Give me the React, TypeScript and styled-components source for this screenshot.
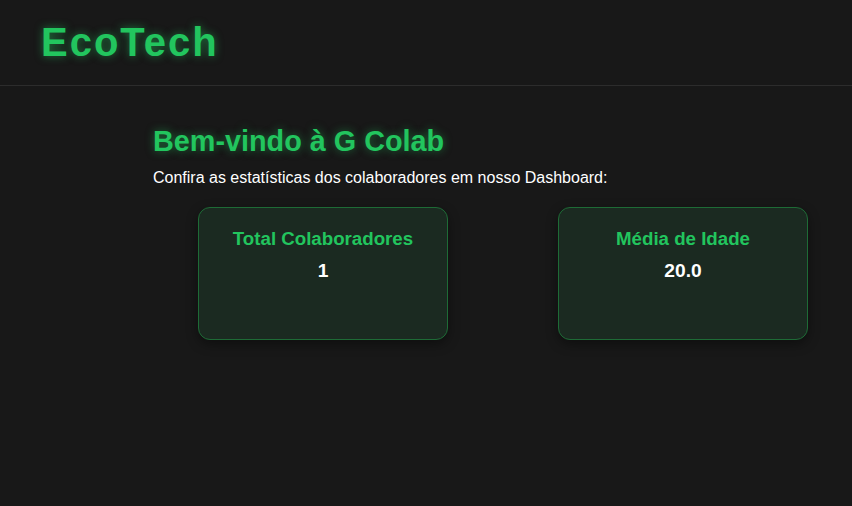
import React from "react";
import styled, { createGlobalStyle } from "styled-components";

const Global = createGlobalStyle`
  html, body { margin: 0; padding: 0; background: #181818; }
  body { font-family: "Liberation Sans", Arial, sans-serif; color: #ffffff; }
  * { box-sizing: border-box; }
`;

const Page = styled.div`
  min-height: 506px;
  background: #181818;
`;

const Header = styled.header`
  height: 86px;
  border-bottom: 1px solid #2c2c2c;
  display: flex;
  align-items: center;
  padding-left: 41px;
`;

const Logo = styled.h1`
  margin: 0;
  font-size: 40px;
  font-weight: 700;
  letter-spacing: 2px;
  color: #22c55e;
  text-shadow: 0 0 8px rgba(34, 197, 94, 0.55);
`;

const Main = styled.main`
  padding: 39px 0 0 153px;
`;

const Title = styled.h2`
  margin: 0;
  font-size: 28.8px;
  font-weight: 700;
  color: #22c55e;
  text-shadow: 0 0 8px rgba(34, 197, 94, 0.5);
`;

const Intro = styled.p`
  margin: 11px 0 0;
  font-size: 16px;
  color: #ffffff;
`;

const Cards = styled.div`
  display: flex;
  gap: 110px;
  padding-left: 45px;
  margin-top: 20px;
`;

const Card = styled.div`
  width: 250px;
  height: 133px;
  background: #1b2a21;
  border: 1px solid #1e6b36;
  border-radius: 12px;
  box-shadow: 0 4px 12px rgba(0, 0, 0, 0.4);
  padding: 20px 20px 20px;
  text-align: center;
`;

const CardTitle = styled.h3`
  margin: 0;
  font-size: 18.7px;
  font-weight: 700;
  color: #22c55e;
`;

const CardValue = styled.p`
  margin: 10px 0 0;
  font-size: 19.2px;
  font-weight: 700;
  color: #ffffff;
`;

const stats = [
  { label: "Total Colaboradores", value: "1" },
  { label: "Média de Idade", value: "20.0" },
];

export default function App() {
  return (
    <Page>
      <Global />
      <Header>
        <Logo>EcoTech</Logo>
      </Header>
      <Main>
        <Title>Bem-vindo à G Colab</Title>
        <Intro>Confira as estatísticas dos colaboradores em nosso Dashboard:</Intro>
        <Cards>
          {stats.map((s) => (
            <Card key={s.label}>
              <CardTitle>{s.label}</CardTitle>
              <CardValue>{s.value}</CardValue>
            </Card>
          ))}
        </Cards>
      </Main>
    </Page>
  );
}
